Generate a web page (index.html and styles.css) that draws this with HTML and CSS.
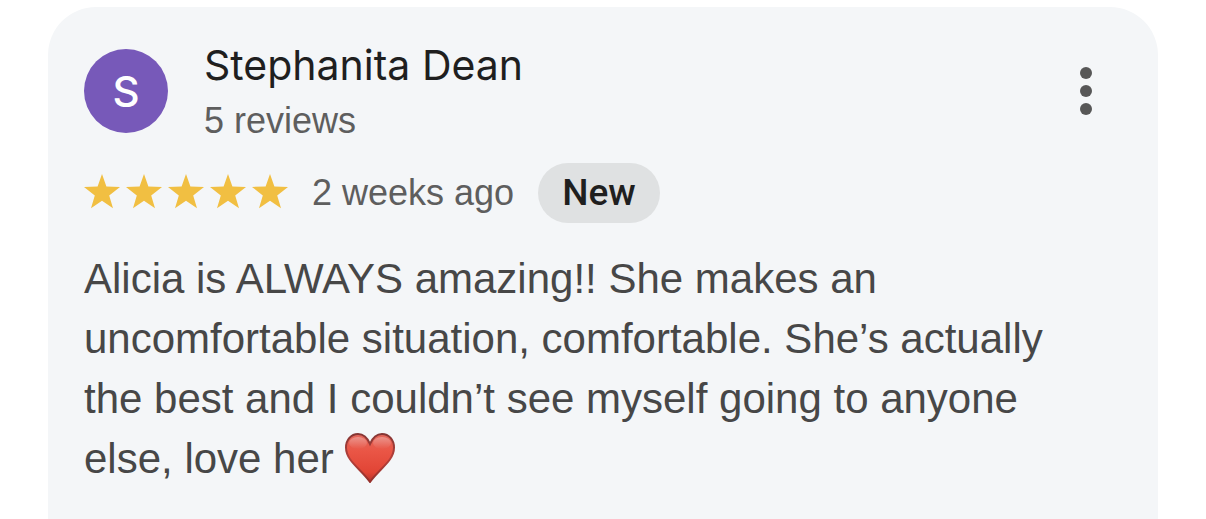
FILE: index.html
```html
<!DOCTYPE html>
<html lang="en">
<head>
<meta charset="UTF-8" />
<meta name="viewport" content="width=device-width, initial-scale=1" />
<title>Review by Stephanita Dean</title>
<link rel="stylesheet" href="styles.css">
</head>
<body>

<article class="review">
  <header class="review-header">
    <div class="avatar" aria-hidden="true">S</div>
    <div class="author">
      <h1 class="author-name">Stephanita Dean</h1>
      <p class="author-count">5 reviews</p>
    </div>
    <button class="menu" type="button" aria-label="More options">
      <svg viewBox="0 0 12 48" width="12" height="48" fill="#575757">
        <circle cx="6" cy="6" r="6" />
        <circle cx="6" cy="24" r="6" />
        <circle cx="6" cy="42" r="6" />
      </svg>
    </button>
  </header>

  <div class="meta">
    <svg class="stars" viewBox="0 0 204 38" width="204" height="38" role="img" aria-label="5 out of 5 stars">
      <defs>
        <path id="star" d="M18 0l4.400 12.600L36 12.900 25.200 21.500 29 34.200l-11-7.500L7 34.200l3.800-12.700L0 12.900l13.600-.3z" />
      </defs>
      <g fill="#f1bf42">
        <use href="#star" />
        <use href="#star" x="42" />
        <use href="#star" x="84" />
        <use href="#star" x="126" />
        <use href="#star" x="168" />
      </g>
    </svg>
    <span class="date">2 weeks ago</span>
    <span class="badge">New</span>
  </div>

  <p class="review-text">Alicia is ALWAYS amazing!! She makes an uncomfortable situation, comfortable. She’s actually the best and I couldn’t see myself going to anyone else, love her
    <svg class="heart" viewBox="0 0 50 50" width="50" height="50" role="img" aria-label="red heart">
      <defs>
        <linearGradient id="heartFill" x1="0" y1="0" x2="0" y2="1">
          <stop offset="0" stop-color="#e2685d" />
          <stop offset=".35" stop-color="#ea5646" />
          <stop offset=".8" stop-color="#e14435" />
          <stop offset="1" stop-color="#b5322a" />
        </linearGradient>
        <linearGradient id="heartEdge" x1="0" y1="0" x2="0" y2="1">
          <stop offset="0" stop-color="#853634" />
          <stop offset=".5" stop-color="#b5403a" />
          <stop offset="1" stop-color="#96302b" />
        </linearGradient>
        <linearGradient id="heartShine" x1="0" y1="0" x2="0" y2="1">
          <stop offset="0" stop-color="#fff" stop-opacity=".3" />
          <stop offset="1" stop-color="#fff" stop-opacity="0" />
        </linearGradient>
      </defs>
      <path d="M25 11C22.500 5 18.500 1 13 1 6 1 1 7 1 14.500 1 28 16 36 25 49 34 36 49 28 49 14.500 49 7 44 1 37 1 31.500 1 27.500 5 25 11z" fill="url(#heartFill)" stroke="url(#heartEdge)" stroke-width="2" />
      <ellipse cx="13" cy="10" rx="9" ry="6" fill="url(#heartShine)" />
      <ellipse cx="37" cy="10" rx="9" ry="6" fill="url(#heartShine)" />
    </svg>
  </p>
</article>

</body>
</html>
```

FILE: styles.css
```css
body {
  margin: 0;
  background: #fff;
  font-family: "Liberation Sans", Arial, sans-serif;
  color: #474747;
}

.review {
  margin: 7px 48px 0;
  padding: 26px 36px 30px;
  min-height: 512px;
  box-sizing: border-box;
  background: #f4f6f8;
  border-radius: 48px 48px 0 0;
}

.review-header {
  display: flex;
  align-items: center;
  gap: 36px;
}

.avatar {
  display: flex;
  align-items: center;
  justify-content: center;
  width: 84px;
  height: 84px;
  border-radius: 50%;
  background: #7759b9;
  color: #fff;
  font-family: Inter, Roboto, sans-serif;
  font-size: 42px;
  font-weight: 500;
}

.author {
  flex: 1;
  padding-top: 4px;
}

.author-name {
  margin: 0;
  font-family: Inter, Roboto, sans-serif;
  font-size: 41px;
  font-weight: 400;
  line-height: 56px;
  color: #1f1f1f;
}

.author-count {
  margin: 0;
  font-size: 36px;
  line-height: 56px;
  color: #5e5e5e;
}

.menu {
  display: flex;
  padding: 18px 30px;
  border: none;
  background: none;
  cursor: pointer;
}

.meta {
  display: flex;
  align-items: center;
  gap: 24px;
  margin-top: 14px;
}

.date {
  font-size: 36px;
  color: #5e5e5e;
}

.badge {
  padding: 0 24px;
  border-radius: 30px;
  background: #dfe1e2;
  color: #1f1f1f;
  font-family: Roboto, sans-serif;
  font-size: 37px;
  font-weight: 500;
  line-height: 60px;
}

.review-text {
  margin: 26px 0 0;
  padding-right: 60px;
  font-size: 42px;
  line-height: 60px;
}

.heart {
  margin-bottom: -10px;
  vertical-align: baseline;
}
```
